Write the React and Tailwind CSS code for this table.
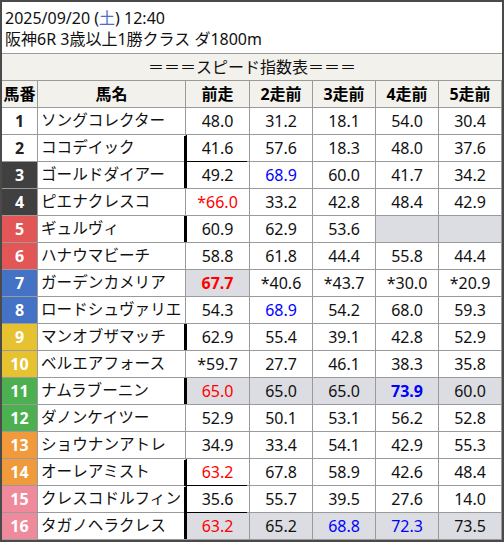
import React from "react";

const FRAME = {
  1: "bg-white text-[#222]",
  2: "bg-white text-[#222]",
  3: "bg-[#404040] text-white",
  4: "bg-[#404040] text-white",
  5: "bg-[#e35656] text-white",
  6: "bg-[#e35656] text-white",
  7: "bg-[#4472c4] text-white",
  8: "bg-[#4472c4] text-white",
  9: "bg-[#e6c230] text-white",
  10: "bg-[#e6c230] text-white",
  11: "bg-[#4caf50] text-white",
  12: "bg-[#4caf50] text-white",
  13: "bg-[#f09a3c] text-white",
  14: "bg-[#f09a3c] text-white",
  15: "bg-[#ef8a9c] text-white",
  16: "bg-[#ef8a9c] text-white",
};

// cell shorthand: "r" red, "b" blue, "B" bold, "g" gray background, "-" empty
const c = (v, flags = "") => ({ v, flags });

const ROWS = [
  { no: 1, name: "ソングコレクター", bar: false, cells: [c("48.0"), c("31.2"), c("18.1"), c("54.0"), c("30.4")] },
  { no: 2, name: "ココデイック", bar: true, cells: [c("41.6"), c("57.6"), c("18.3"), c("48.0"), c("37.6")] },
  { no: 3, name: "ゴールドダイアー", bar: true, cells: [c("49.2"), c("68.9", "b"), c("60.0"), c("41.7"), c("34.2")] },
  { no: 4, name: "ピエナクレスコ", bar: false, cells: [c("*66.0", "r"), c("33.2"), c("42.8"), c("48.4"), c("42.9")] },
  { no: 5, name: "ギュルヴィ", bar: true, cells: [c("60.9"), c("62.9"), c("53.6"), c("", "g"), c("", "g")] },
  { no: 6, name: "ハナウマビーチ", bar: false, cells: [c("58.8"), c("61.8"), c("44.4"), c("55.8"), c("44.4")] },
  { no: 7, name: "ガーデンカメリア", bar: false, cells: [c("67.7", "rBg"), c("*40.6"), c("*43.7"), c("*30.0"), c("*20.9")] },
  { no: 8, name: "ロードシュヴァリエ", bar: false, cells: [c("54.3"), c("68.9", "b"), c("54.2"), c("68.0"), c("59.3")] },
  { no: 9, name: "マンオブザマッチ", bar: true, cells: [c("62.9"), c("55.4"), c("39.1"), c("42.8"), c("52.9")] },
  { no: 10, name: "ベルエアフォース", bar: false, cells: [c("*59.7"), c("27.7"), c("46.1"), c("38.3"), c("35.8")] },
  { no: 11, name: "ナムラブーニン", bar: true, cells: [c("65.0", "rg"), c("65.0", "g"), c("65.0", "g"), c("73.9", "bBg"), c("60.0", "g")] },
  { no: 12, name: "ダノンケイツー", bar: false, cells: [c("52.9"), c("50.1"), c("53.1"), c("56.2"), c("52.8")] },
  { no: 13, name: "ショウナンアトレ", bar: false, cells: [c("34.9"), c("33.4"), c("54.1"), c("42.9"), c("55.3")] },
  { no: 14, name: "オーレアミスト", bar: true, cells: [c("63.2", "r"), c("67.8"), c("58.9"), c("42.6"), c("48.4")] },
  { no: 15, name: "クレスコドルフィン", bar: true, cells: [c("35.6"), c("55.7"), c("39.5"), c("27.6"), c("14.0")] },
  { no: 16, name: "タガノヘラクレス", bar: true, cells: [c("63.2", "rg"), c("65.2", "g"), c("68.8", "bg"), c("72.3", "bg"), c("73.5", "g")] },
];

const HEADS = ["前走", "2走前", "3走前", "4走前", "5走前"];

const cols = "grid grid-cols-[35px_147px_63px_62px_62px_62px_62px] gap-x-px";

const ValueCell = ({ cell, bar, next }) => {
  const f = cell.flags;
  const color = f.includes("r") ? "text-[#ff0000]" : f.includes("b") ? "text-[#0000ff]" : "text-[#111]";
  const weight = f.includes("B") ? "font-bold" : "font-normal";
  const bg = f.includes("g") ? "bg-[#dcdde2]" : "bg-white";
  const edge = bar
    ? next
      ? "shadow-[-2px_1px_0_0_#000,inset_1px_0_0_0_#000]"
      : "shadow-[-2px_0_0_0_#000,inset_1px_0_0_0_#000]"
    : "";
  return (
    <div className={`flex items-center justify-center ${bg} ${color} ${weight} ${edge}`}>
      {cell.v}
    </div>
  );
};

export default function App() {
  return (
    <div
      className="w-[504px] h-[542px] border-2 border-[#4a4a4a] bg-white overflow-hidden text-[16px] leading-none"
      style={{ fontFamily: '"Noto Sans", "Noto Sans CJK JP", sans-serif' }}
    >
      {/* title */}
      <div className="h-[51px] flex flex-col justify-center gap-[5px] pl-[3px] pt-[1px] text-[#111]">
        <div>
          2025/09/20 (<span className="text-[#4a70c8]">土</span>) 12:40
        </div>
        <div>阪神6R 3歳以上1勝クラス ダ1800m</div>
      </div>

      {/* table */}
      <div className="flex flex-col gap-y-px bg-[#9a9a9a] pt-px pb-px">
        <div className="h-[26px] bg-[#f2f1ec] flex items-center justify-center text-[#111]">
          ＝＝＝スピード指数表＝＝＝
        </div>
        <div className={`${cols} h-[26px]`}>
          <div className="bg-[#f2f1ec] flex items-center justify-center font-bold">馬番</div>
          <div className="bg-[#f2f1ec] flex items-center justify-center font-bold">馬名</div>
          {HEADS.map((h) => (
            <div key={h} className="bg-[#f2f1ec] flex items-center justify-center font-bold">
              {h}
            </div>
          ))}
        </div>
        {ROWS.map((r, i) => (
          <div key={r.no} className={`${cols} h-[26px]`}>
            <div className={`flex items-center justify-center font-bold ${FRAME[r.no]}`}>{r.no}</div>
            <div className="bg-white flex items-center pl-[3px] text-[15.6px] text-[#111] whitespace-nowrap overflow-hidden">
              {r.name}
            </div>
            {r.cells.map((cell, j) => (
              <ValueCell
                key={j}
                cell={cell}
                bar={j === 0 && r.bar}
                next={j === 0 && r.bar && ROWS[i + 1] && ROWS[i + 1].bar}
              />
            ))}
          </div>
        ))}
      </div>
    </div>
  );
}
